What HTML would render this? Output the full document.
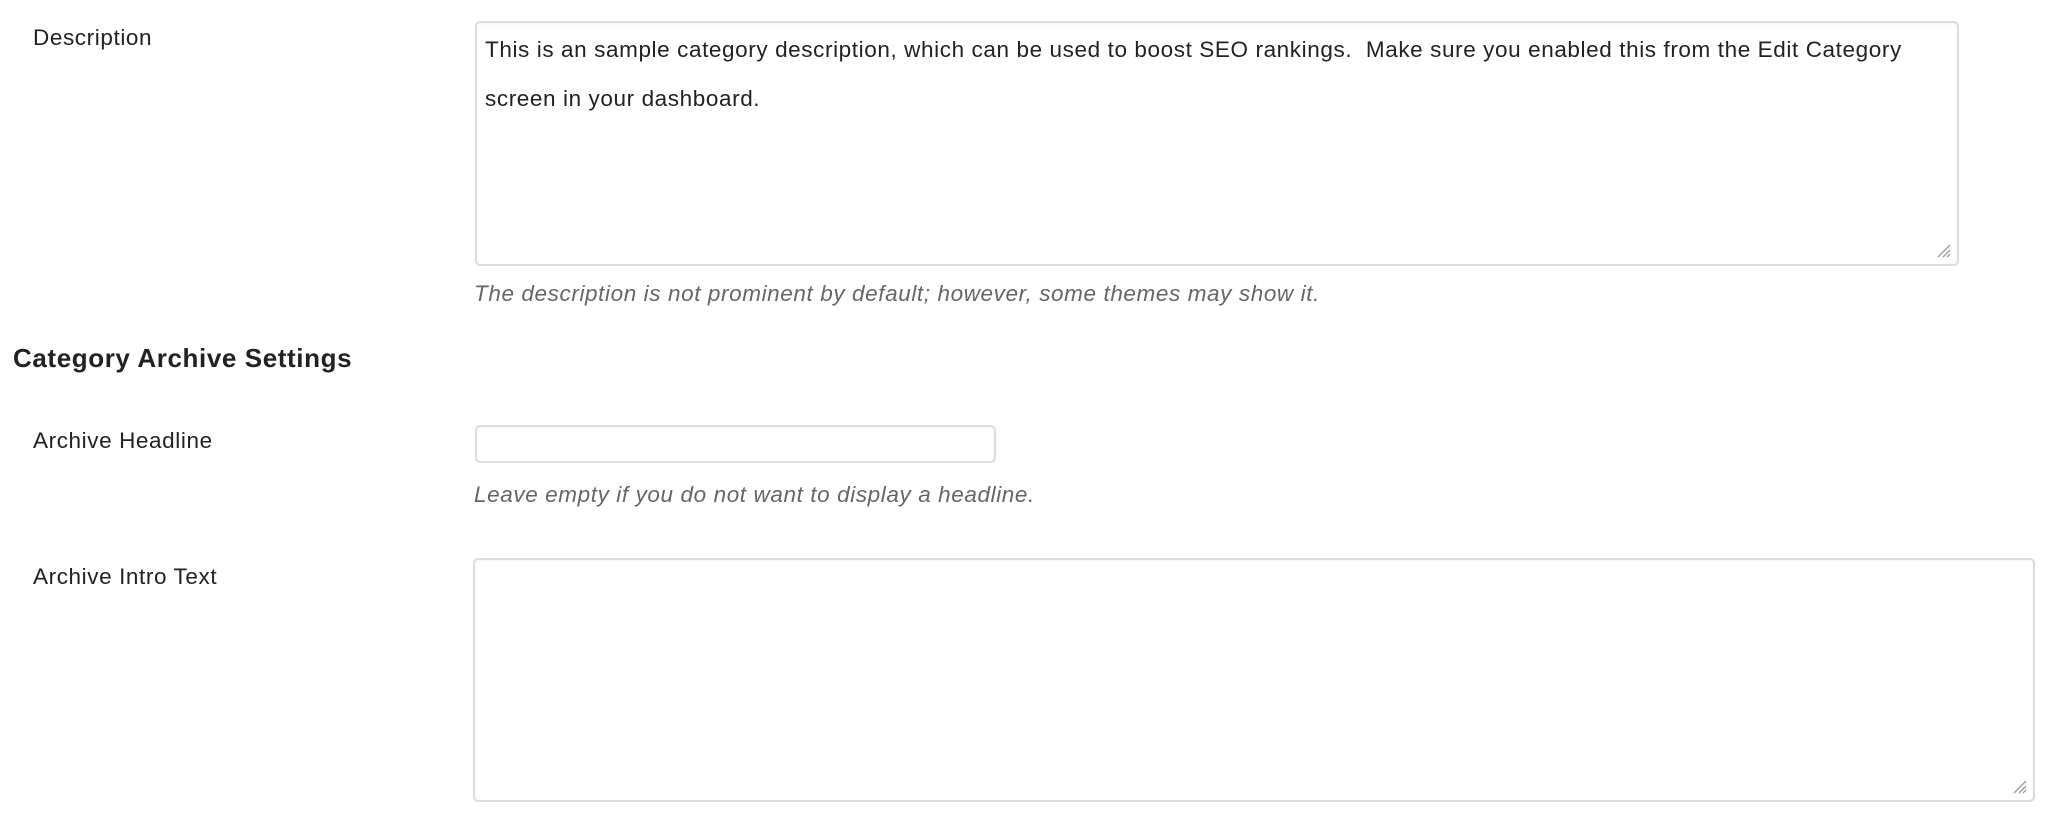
<!DOCTYPE html>
<html><head><meta charset="utf-8"><style>
body{margin:0;width:2064px;height:821px;background:#fff;font-family:"Liberation Sans",Arial,sans-serif;color:#222;position:relative;overflow:hidden;letter-spacing:0.6px}
.a{position:absolute;white-space:nowrap}
.lbl{font-size:22.5px;left:33px}
.box{position:absolute;border:2px solid #ddd;border-radius:5px;box-sizing:border-box;background:#fff;box-shadow:inset 0 1px 2px rgba(0,0,0,.05)}
.help{font-size:22.5px;font-style:italic;color:#666;left:474px}
.grip{position:absolute;right:6px;bottom:6px;width:16px;height:16px}
</style></head><body>
<div class="a lbl" style="top:25px">Description</div>
<div class="box" style="left:475px;top:21px;width:1484px;height:245px">
<div style="position:absolute;left:8px;top:2px;font-size:22.5px;line-height:49px;color:#222;white-space:nowrap">This is an sample category description, which can be used to boost SEO rankings.&nbsp; Make sure you enabled this from the Edit Category<br>screen in your dashboard.</div>
<svg class="grip" viewBox="0 0 16 16"><path d="M15 3L3 15M15 8L8 15M15 12L12 15" stroke="#999" stroke-width="1.3"/></svg>
</div>
<div class="a help" style="top:281px">The description is not prominent by default; however, some themes may show it.</div>
<div class="a" style="left:13px;top:343px;font-size:26px;font-weight:bold;color:#222">Category Archive Settings</div>
<div class="a lbl" style="top:428px">Archive Headline</div>
<div class="box" style="left:475px;top:425px;width:521px;height:38px"></div>
<div class="a help" style="top:482px">Leave empty if you do not want to display a headline.</div>
<div class="a lbl" style="top:564px">Archive Intro Text</div>
<div class="box" style="left:473px;top:558px;width:1562px;height:244px">
<svg class="grip" viewBox="0 0 16 16"><path d="M15 3L3 15M15 8L8 15M15 12L12 15" stroke="#999" stroke-width="1.3"/></svg>
</div>
</body></html>
